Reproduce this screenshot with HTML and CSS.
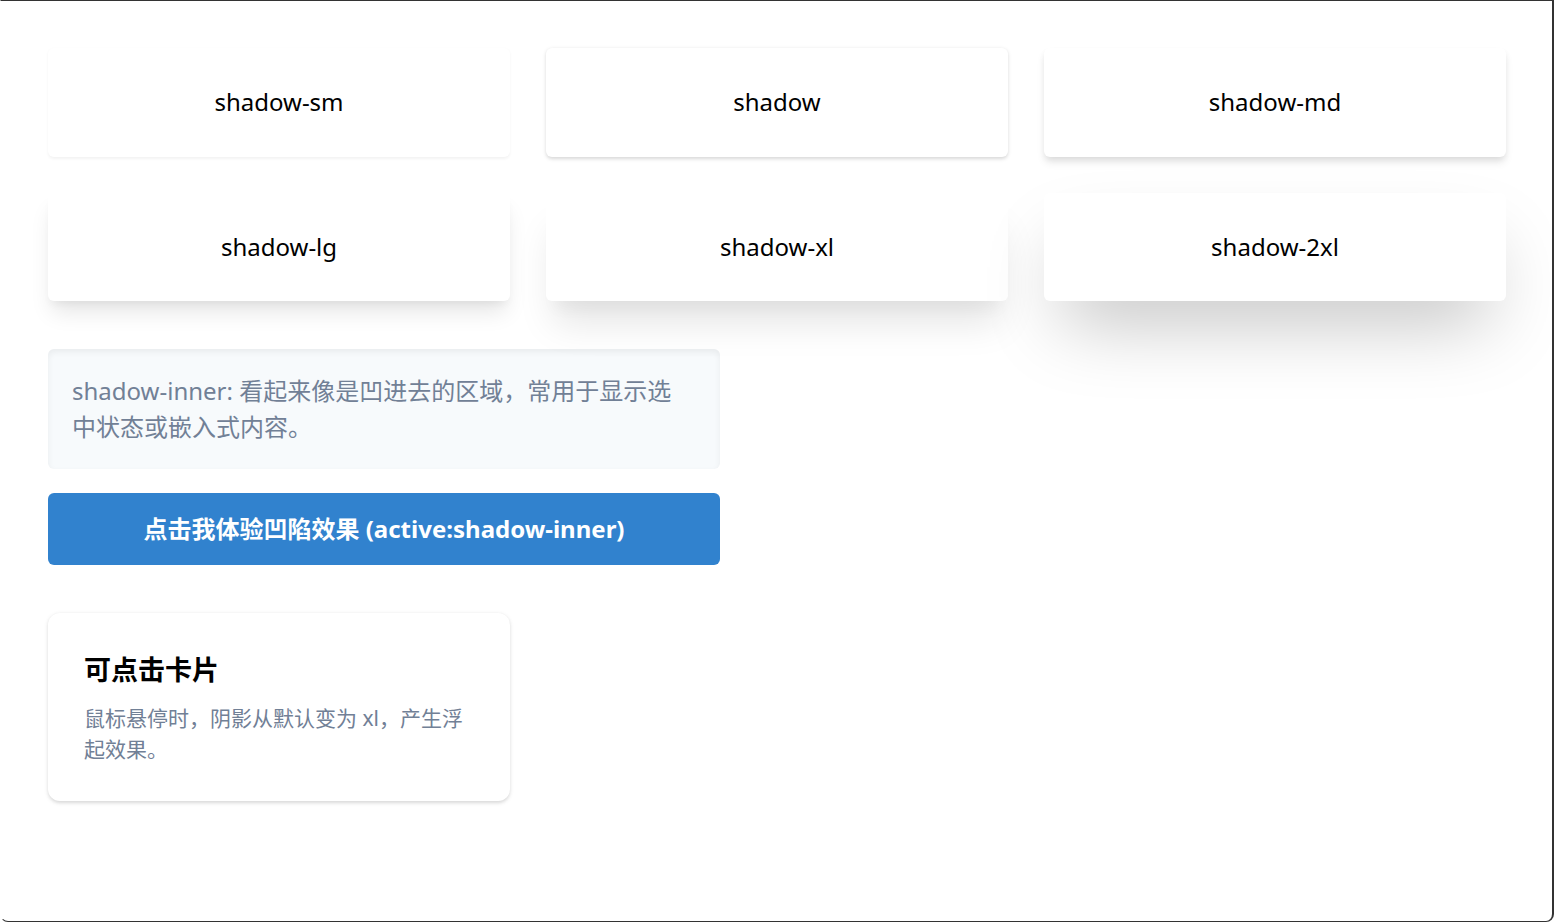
FILE: index.html
```html
<!DOCTYPE html>
<html lang="zh-CN">
<head>
    <meta charset="UTF-8">
    <title>Shadow Demo</title>
    <link rel="stylesheet" href="styles.css">
</head>
<body>
    <div class="demo-page">
        <!-- Shadow sizes -->
        <div class="shadow-grid">
            <div class="shadow-box shadow-sm">shadow-sm</div>
            <div class="shadow-box shadow-base">shadow</div>
            <div class="shadow-box shadow-md">shadow-md</div>
            <div class="shadow-box shadow-lg">shadow-lg</div>
            <div class="shadow-box shadow-xl">shadow-xl</div>
            <div class="shadow-box shadow-2xl">shadow-2xl</div>
        </div>

        <!-- Inner shadow -->
        <div class="inner-section">
            <div class="inner-box">
                shadow-inner: 看起来像是凹进去的区域，常用于显示选中状态或嵌入式内容。
            </div>
            <button class="press-btn">点击我体验凹陷效果 (active:shadow-inner)</button>
        </div>

        <!-- Hover card -->
        <div class="card-row">
            <div class="hover-card">
                <h3 class="card-title">可点击卡片</h3>
                <p class="card-desc">鼠标悬停时，阴影从默认变为 xl，产生浮起效果。</p>
            </div>
        </div>
    </div>

    <div class="window-frame"></div>
</body>
</html>
```

FILE: styles.css
```css
:root {
    --gray-text: #718096;
    --gray-bg: #f7fafc;
    --blue: #3182ce;
}

* {
    box-sizing: border-box;
    margin: 0;
    padding: 0;
}

body {
    font-family: 'Noto Sans', 'Noto Sans CJK SC', sans-serif;
    background-color: white;
    color: black;
    font-size: 24px;
    line-height: 36px;
}

.demo-page {
    padding: 48px;
}

.shadow-grid {
    display: grid;
    grid-template-columns: repeat(3, 1fr);
    gap: 36px;
}

.shadow-box {
    background-color: white;
    border-radius: 6px;
    padding: 36px;
    line-height: 36.5px;
    text-align: center;
}

.shadow-sm {
    box-shadow: 0 1.5px 3px 0 rgba(0,0,0,0.05);
}

.shadow-base {
    box-shadow: 0 1.5px 4.5px 0 rgba(0,0,0,0.1), 0 1.5px 3px 0 rgba(0,0,0,0.06);
}

.shadow-md {
    box-shadow: 0 6px 9px -1.5px rgba(0,0,0,0.1), 0 3px 6px -1.5px rgba(0,0,0,0.06);
}

.shadow-lg {
    box-shadow: 0 15px 22.5px -4.5px rgba(0,0,0,0.1), 0 6px 9px -3px rgba(0,0,0,0.05);
}

.shadow-xl {
    box-shadow: 0 30px 37.5px -7.5px rgba(0,0,0,0.1), 0 15px 15px -7.5px rgba(0,0,0,0.04);
}

.shadow-2xl {
    box-shadow: 0 37.5px 75px -18px rgba(0,0,0,0.25);
}

.inner-section {
    margin-top: 48px;
    max-width: 672px;
}

.inner-box {
    background-color: var(--gray-bg);
    color: var(--gray-text);
    border-radius: 6px;
    padding: 24px 27px 24px 24px;
    box-shadow: inset 0 3px 6px 0 rgba(0,0,0,0.06);
}

.press-btn {
    display: block;
    width: 100%;
    margin-top: 24px;
    padding: 18px 24px;
    border: none;
    border-radius: 6px;
    background-color: var(--blue);
    color: white;
    font-family: inherit;
    font-size: 24px;
    line-height: 36px;
    font-weight: bold;
    cursor: pointer;
}

.press-btn:active {
    box-shadow: inset 0 3px 6px 0 rgba(0,0,0,0.06);
}

.card-row {
    margin-top: 48px;
    display: grid;
    grid-template-columns: repeat(3, 1fr);
    gap: 36px;
}

.hover-card {
    background-color: white;
    border-radius: 12px;
    padding: 36px;
    box-shadow: 0 1.5px 4.5px 0 rgba(0,0,0,0.1), 0 1.5px 3px 0 rgba(0,0,0,0.06);
    cursor: pointer;
    transition: box-shadow 0.3s ease;
}

.hover-card:hover {
    box-shadow: 0 30px 37.5px -7.5px rgba(0,0,0,0.1), 0 15px 15px -7.5px rgba(0,0,0,0.04);
}

.card-title {
    font-size: 27px;
    line-height: 42px;
    font-weight: bold;
    margin-bottom: 12px;
}

.card-desc {
    color: var(--gray-text);
    font-size: 21px;
    line-height: 31px;
}

.window-frame {
    position: fixed;
    top: 0;
    left: 0;
    right: 0;
    bottom: 0;
    border: 1px solid #333;
    border-right-width: 2px;
    border-left-color: transparent;
    border-radius: 0 0 8px 8px;
    pointer-events: none;
}
```
